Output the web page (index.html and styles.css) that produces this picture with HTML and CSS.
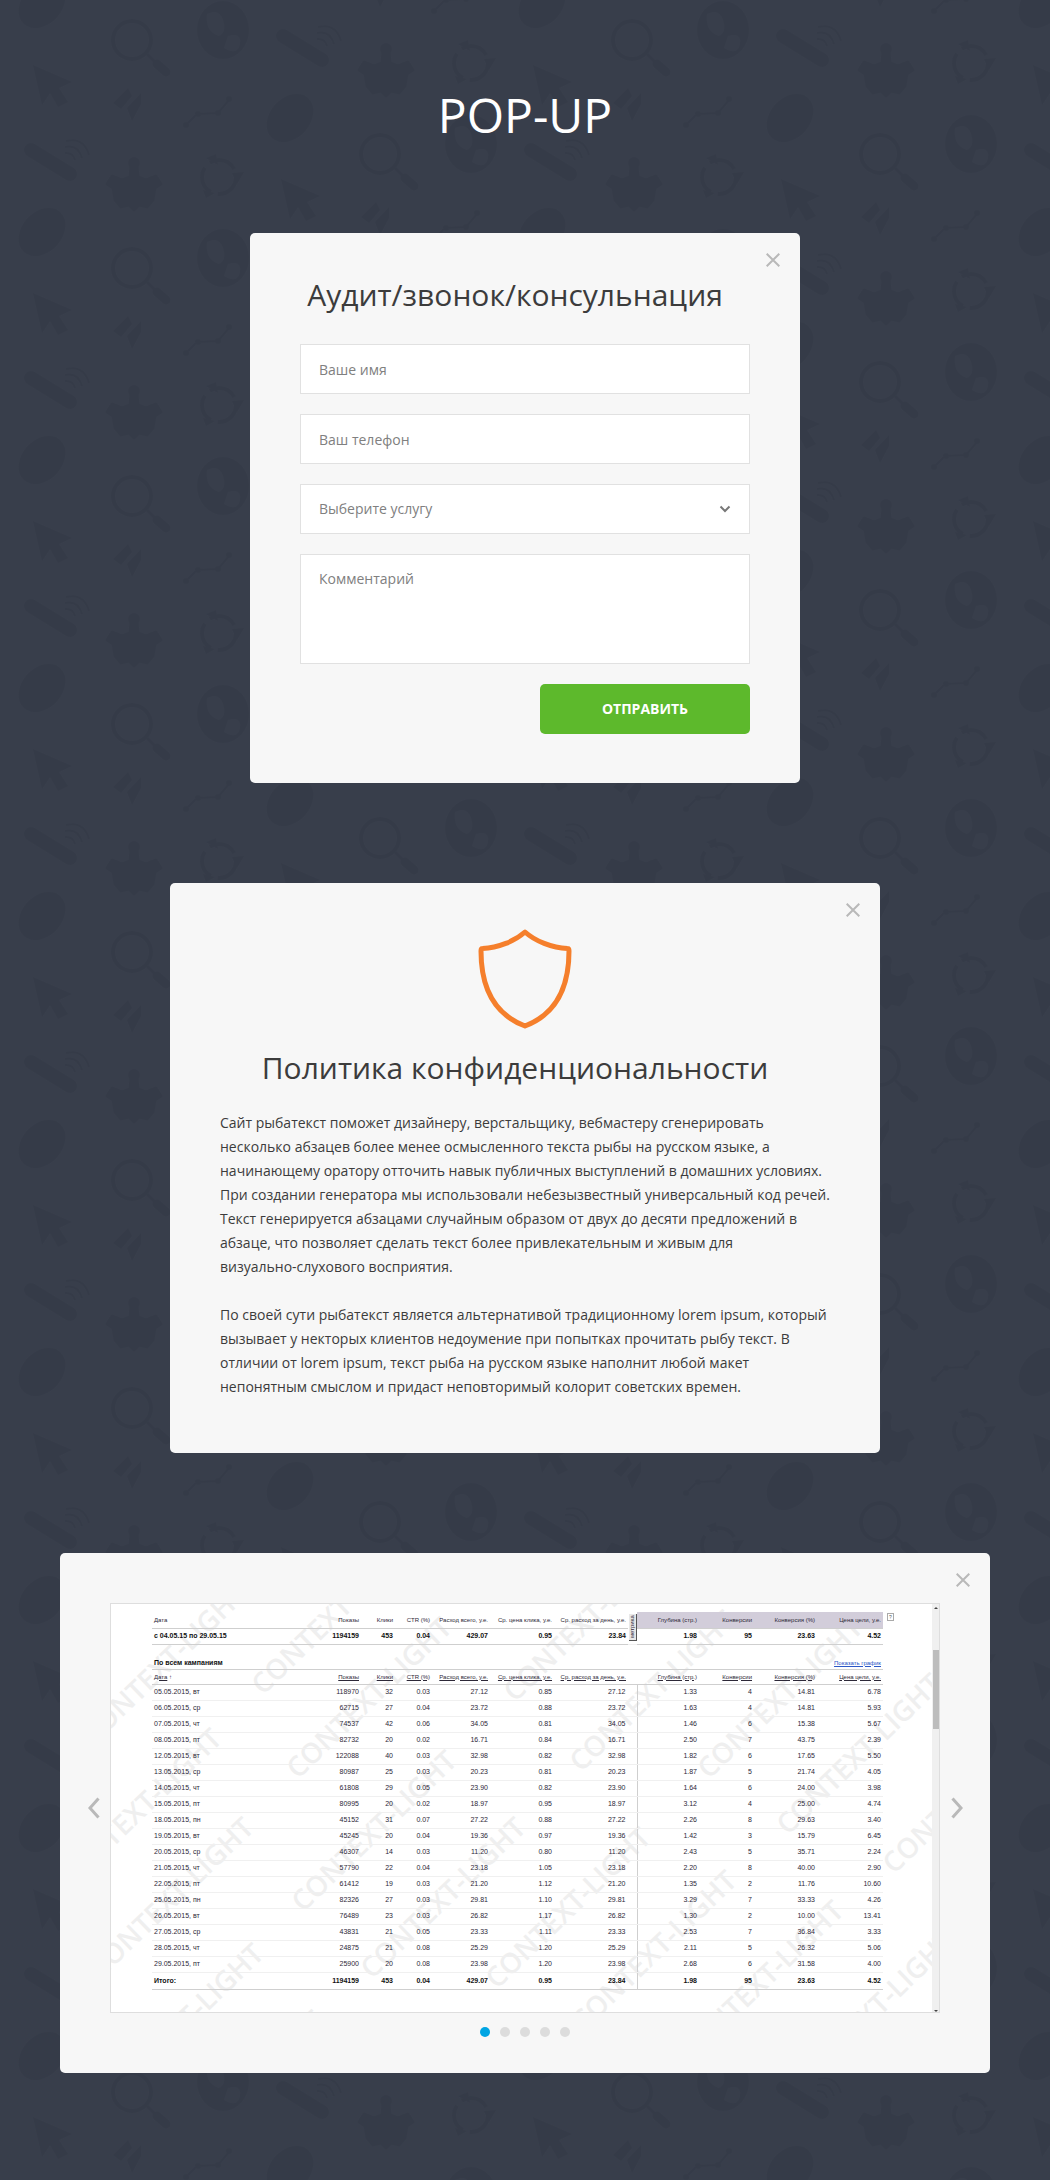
FILE: index.html
```html
<!DOCTYPE html>
<html lang="ru">
<head>
<meta charset="utf-8">
<meta name="viewport" content="width=device-width, initial-scale=1">
<title>POP-UP</title>
<link rel="stylesheet" href="styles.css">
</head>
<body>
<main class="page">
  <h1 class="page-title">POP-UP</h1>

  <section class="popup popup-form" aria-labelledby="form-title">
    <button class="close" type="button" aria-label="Закрыть"><svg width="14" height="14" viewBox="0 0 14 14"><path d="M0.7 0.7 13.3 13.3M13.3 0.7 0.7 13.3"/></svg></button>
    <h2 class="popup-title" id="form-title">Аудит/звонок/консульнация</h2>
    <form class="form">
      <input class="field" type="text" aria-label="Ваше имя" placeholder="Ваше имя">
      <input class="field" type="tel" aria-label="Ваш телефон" placeholder="Ваш телефон">
      <select class="field select" aria-label="Выберите услугу"><option>Выберите услугу</option></select>
      <textarea class="field area" aria-label="Комментарий" placeholder="Комментарий"></textarea>
      <button class="submit" type="submit">ОТПРАВИТЬ</button>
    </form>
  </section>

  <section class="popup popup-policy" aria-labelledby="policy-title">
    <button class="close" type="button" aria-label="Закрыть"><svg width="14" height="14" viewBox="0 0 14 14"><path d="M0.7 0.7 13.3 13.3M13.3 0.7 0.7 13.3"/></svg></button>
    <svg class="shield" width="94" height="100" viewBox="0 0 94 100" aria-hidden="true"><path d="M47 3C37 12 20 19 4.500 19.500Q3 19.500 3 22C3 55 13 84 47 97C81 84 91 55 91 22Q91 19.500 89.500 19.500C74 19 57 12 47 3Z"/></svg>
    <h2 class="popup-title" id="policy-title">Политика конфиденциональности</h2>
    <div class="policy-text">
      <p>Сайт рыбатекст поможет дизайнеру, верстальщику, вебмастеру сгенерировать несколько абзацев более менее осмысленного текста рыбы на русском языке, а начинающему оратору отточить навык публичных выступлений в домашних условиях. При создании генератора мы использовали небезызвестный универсальный код речей. Текст генерируется абзацами случайным образом от двух до десяти предложений в абзаце, что позволяет сделать текст более привлекательным и живым для <span class="nowrap">визуально-слухового</span> восприятия.</p>
      <p>По своей сути рыбатекст является альтернативой традиционному lorem ipsum, который вызывает у некторых клиентов недоумение при попытках прочитать рыбу текст. В отличии от lorem ipsum, текст рыба на русском языке наполнит любой макет непонятным смыслом и придаст неповторимый колорит советских времен.</p>
    </div>
  </section>

  <section class="popup popup-slider" aria-label="Статистика">
    <button class="close" type="button" aria-label="Закрыть"><svg width="14" height="14" viewBox="0 0 14 14"><path d="M0.7 0.7 13.3 13.3M13.3 0.7 0.7 13.3"/></svg></button>
    <div class="slider">
      <button class="arrow" type="button" aria-label="Назад"><svg width="12" height="22" viewBox="0 0 12 22"><path d="M10.500 1.500 2 11 10.500 20.500"/></svg></button>
      <div class="slide">
        <svg class="watermarks" aria-hidden="true">
          <text transform="translate(152 92) rotate(-44)">CONTEXT-LIGHT</text>
          <text transform="translate(187 176) rotate(-44)">CONTEXT-LIGHT</text>
          <text transform="translate(-18 142) rotate(-44)">CONTEXT-LIGHT</text>
          <text transform="translate(-43 287) rotate(-44)">CONTEXT-LIGHT</text>
          <text transform="translate(-11 376) rotate(-44)">CONTEXT-LIGHT</text>
          <text transform="translate(192 309) rotate(-44)">CONTEXT-LIGHT</text>
          <text transform="translate(261 376) rotate(-44)">CONTEXT-LIGHT</text>
          <text transform="translate(-1 502) rotate(-44)">CONTEXT-LIGHT</text>
          <text transform="translate(59 569) rotate(-44)">CONTEXT-LIGHT</text>
          <text transform="translate(404 99) rotate(-44)">CONTEXT-LIGHT</text>
          <text transform="translate(470 169) rotate(-44)">CONTEXT-LIGHT</text>
          <text transform="translate(598 176) rotate(-44)">CONTEXT-LIGHT</text>
          <text transform="translate(677 232) rotate(-44)">CONTEXT-LIGHT</text>
          <text transform="translate(386 386) rotate(-44)">CONTEXT-LIGHT</text>
          <text transform="translate(472 429) rotate(-44)">CONTEXT-LIGHT</text>
          <text transform="translate(579 459) rotate(-44)">CONTEXT-LIGHT</text>
          <text transform="translate(783 271) rotate(-44)">CONTEXT-LIGHT</text>
          <text transform="translate(690 489) rotate(-44)">CONTEXT-LIGHT</text>
        </svg>
        <div class="report">
          <div class="summary">
            <table class="stats stats-summary">
              <colgroup><col><col class="c-shows"><col class="c-clicks"><col class="c-ctr"><col class="c-cost"><col class="c-cpc"><col class="c-day"><col class="c-tag"><col class="c-depth"><col class="c-conv"><col class="c-rate"><col class="c-goal"></colgroup>
              <tr><th>Дата</th><th>Показы</th><th>Клики</th><th>CTR (%)</th><th>Расход всего, у.е.</th><th>Ср. цена клика, у.е.</th><th>Ср. расход за день, у.е.</th><td class="tag" rowspan="2"><span>метрика</span></td><th class="hl">Глубина (стр.)</th><th class="hl">Конверсии</th><th class="hl">Конверсия (%)</th><th class="hl">Цена цели, у.е.</th></tr>
              <tr class="total"><td>с 04.05.15 по 29.05.15</td><td>1194159</td><td>453</td><td>0.04</td><td>429.07</td><td>0.95</td><td>23.84</td><td>1.98</td><td>95</td><td>23.63</td><td>4.52</td></tr>
            </table>
            <button class="help" type="button">?</button>
          </div>
          <div class="report-head"><h3>По всем кампаниям</h3><a href="#">Показать график</a></div>
          <table class="stats stats-main">
            <colgroup><col><col class="c-shows"><col class="c-clicks"><col class="c-ctr"><col class="c-cost"><col class="c-cpc"><col class="c-day-wide"><col class="c-depth"><col class="c-conv"><col class="c-rate"><col class="c-goal"></colgroup>
            <thead><tr><th><u>Дата</u> ↑</th><th><u>Показы</u></th><th><u>Клики</u></th><th><u>CTR (%)</u></th><th><u>Расход всего, у.е.</u></th><th><u>Ср. цена клика, у.е.</u></th><th><u>Ср. расход за день, у.е.</u></th><th><u>Глубина (стр.)</u></th><th><u>Конверсии</u></th><th><u>Конверсия (%)</u></th><th><u>Цена цели, у.е.</u></th></tr></thead>
            <tbody>
            <tr><td>05.05.2015, вт</td><td>118970</td><td>32</td><td>0.03</td><td>27.12</td><td>0.85</td><td>27.12</td><td>1.33</td><td>4</td><td>14.81</td><td>6.78</td></tr>
            <tr><td>06.05.2015, ср</td><td>62715</td><td>27</td><td>0.04</td><td>23.72</td><td>0.88</td><td>23.72</td><td>1.63</td><td>4</td><td>14.81</td><td>5.93</td></tr>
            <tr><td>07.05.2015, чт</td><td>74537</td><td>42</td><td>0.06</td><td>34.05</td><td>0.81</td><td>34.05</td><td>1.46</td><td>6</td><td>15.38</td><td>5.67</td></tr>
            <tr><td>08.05.2015, пт</td><td>82732</td><td>20</td><td>0.02</td><td>16.71</td><td>0.84</td><td>16.71</td><td>2.50</td><td>7</td><td>43.75</td><td>2.39</td></tr>
            <tr><td>12.05.2015, вт</td><td>122088</td><td>40</td><td>0.03</td><td>32.98</td><td>0.82</td><td>32.98</td><td>1.82</td><td>6</td><td>17.65</td><td>5.50</td></tr>
            <tr><td>13.05.2015, ср</td><td>80987</td><td>25</td><td>0.03</td><td>20.23</td><td>0.81</td><td>20.23</td><td>1.87</td><td>5</td><td>21.74</td><td>4.05</td></tr>
            <tr><td>14.05.2015, чт</td><td>61808</td><td>29</td><td>0.05</td><td>23.90</td><td>0.82</td><td>23.90</td><td>1.64</td><td>6</td><td>24.00</td><td>3.98</td></tr>
            <tr><td>15.05.2015, пт</td><td>80995</td><td>20</td><td>0.02</td><td>18.97</td><td>0.95</td><td>18.97</td><td>3.12</td><td>4</td><td>25.00</td><td>4.74</td></tr>
            <tr><td>18.05.2015, пн</td><td>45152</td><td>31</td><td>0.07</td><td>27.22</td><td>0.88</td><td>27.22</td><td>2.26</td><td>8</td><td>29.63</td><td>3.40</td></tr>
            <tr><td>19.05.2015, вт</td><td>45245</td><td>20</td><td>0.04</td><td>19.36</td><td>0.97</td><td>19.36</td><td>1.42</td><td>3</td><td>15.79</td><td>6.45</td></tr>
            <tr><td>20.05.2015, ср</td><td>46307</td><td>14</td><td>0.03</td><td>11.20</td><td>0.80</td><td>11.20</td><td>2.43</td><td>5</td><td>35.71</td><td>2.24</td></tr>
            <tr><td>21.05.2015, чт</td><td>57790</td><td>22</td><td>0.04</td><td>23.18</td><td>1.05</td><td>23.18</td><td>2.20</td><td>8</td><td>40.00</td><td>2.90</td></tr>
            <tr><td>22.05.2015, пт</td><td>61412</td><td>19</td><td>0.03</td><td>21.20</td><td>1.12</td><td>21.20</td><td>1.35</td><td>2</td><td>11.76</td><td>10.60</td></tr>
            <tr><td>25.05.2015, пн</td><td>82326</td><td>27</td><td>0.03</td><td>29.81</td><td>1.10</td><td>29.81</td><td>3.29</td><td>7</td><td>33.33</td><td>4.26</td></tr>
            <tr><td>26.05.2015, вт</td><td>76489</td><td>23</td><td>0.03</td><td>26.82</td><td>1.17</td><td>26.82</td><td>1.30</td><td>2</td><td>10.00</td><td>13.41</td></tr>
            <tr><td>27.05.2015, ср</td><td>43831</td><td>21</td><td>0.05</td><td>23.33</td><td>1.11</td><td>23.33</td><td>2.53</td><td>7</td><td>36.84</td><td>3.33</td></tr>
            <tr><td>28.05.2015, чт</td><td>24875</td><td>21</td><td>0.08</td><td>25.29</td><td>1.20</td><td>25.29</td><td>2.11</td><td>5</td><td>26.32</td><td>5.06</td></tr>
            <tr><td>29.05.2015, пт</td><td>25900</td><td>20</td><td>0.08</td><td>23.98</td><td>1.20</td><td>23.98</td><td>2.68</td><td>6</td><td>31.58</td><td>4.00</td></tr>
            </tbody>
            <tfoot><tr class="total"><td>Итого:</td><td>1194159</td><td>453</td><td>0.04</td><td>429.07</td><td>0.95</td><td>23.84</td><td>1.98</td><td>95</td><td>23.63</td><td>4.52</td></tr></tfoot>
          </table>
          <h3 class="next-head">По способам</h3>
        </div>
        <div class="scrollbar" aria-hidden="true"><i class="up"></i><i class="thumb"></i><i class="down"></i></div>
      </div>
      <button class="arrow" type="button" aria-label="Вперёд"><svg width="12" height="22" viewBox="0 0 12 22"><path d="M1.500 1.500 10 11 1.500 20.500"/></svg></button>
    </div>
    <div class="dots">
      <button class="dot active" type="button" aria-label="Слайд 1"></button>
      <button class="dot" type="button" aria-label="Слайд 2"></button>
      <button class="dot" type="button" aria-label="Слайд 3"></button>
      <button class="dot" type="button" aria-label="Слайд 4"></button>
      <button class="dot" type="button" aria-label="Слайд 5"></button>
    </div>
  </section>
</main>
</body>
</html>
```
FILE: styles.css
```css
* { box-sizing: border-box; }

body {
  margin: 0;
  font: 14px/24px "Open Sans", "Noto Sans", sans-serif;
  color: #3c3c3c;
  background-color: #383e4b;
  background-image: url("data:image/svg+xml,%3Csvg xmlns='http://www.w3.org/2000/svg' xmlns:xlink='http://www.w3.org/1999/xlink' width='500' height='228'%3E%3Cdefs%3E%3Cg id='a' fill='%23353b48' stroke='%23353b48' stroke-width='0'%3E%3Cellipse cx='42' cy='4' rx='20' ry='27' transform='rotate(42 42 4)'/%3E%3Ccircle cx='132' cy='40' r='19' fill='none' stroke-width='4'/%3E%3Cpath d='M147 54 155 62' stroke-width='3'/%3E%3Cpath d='M157 64 166 72' stroke-width='9' stroke-linecap='round'/%3E%3Cellipse cx='223' cy='30' rx='26' ry='29'/%3E%3Cpath d='M207 14q12-6 16 6t-4 16q-14-4-12-22zM228 36q14-4 12 8t-16 4z' fill='%23383e4b'/%3E%3Cpath d='M283 36 322 60' stroke-width='14' stroke-linecap='round'/%3E%3Cpath d='M318 27q18-4 23 14M317 33q13-3 17 11M317 39q8-1 10 7' fill='none' stroke-width='2'/%3E%3Ccircle cx='386' cy='49' r='6'/%3E%3Cpath d='M383 52h6l1 11 8 3 10-4 5 8-6 4-2 12-6 7-8-2-5 5-5-5-8 2-6-7-2-12-6-4 5-8 10 4 8-3z' stroke-width='3' stroke-linejoin='round'/%3E%3Ccircle cx='471' cy='63' r='17' fill='none' stroke-width='4' stroke-dasharray='28 7'/%3E%3Cpath d='M458 44l10-4 2 11zM489 70l7-12-12 1zM455 76l3 8 9-5zM33 65 72 82 59 88 68 102 58 107 50 93 42 105z'/%3E%3Cpath d='M113 103l15-15 4 8-11 13zM127 108l14-15 0 11-9 17z'/%3E%3Cpath d='M186 125 197 114 218 113 229 100' fill='none' stroke-width='2'/%3E%3Ccircle cx='186' cy='125' r='3'/%3E%3Ccircle cx='198' cy='114' r='3'/%3E%3Ccircle cx='218' cy='113' r='3'/%3E%3Ccircle cx='229' cy='99' r='3'/%3E%3C/g%3E%3C/defs%3E%3Cuse xlink:href='%23a'/%3E%3Cuse xlink:href='%23a' y='228'/%3E%3Cuse xlink:href='%23a' x='500'/%3E%3Cuse xlink:href='%23a' x='-500'/%3E%3Cuse xlink:href='%23a' x='248' y='114'/%3E%3Cuse xlink:href='%23a' x='-252' y='114'/%3E%3Cuse xlink:href='%23a' x='248' y='-114'/%3E%3Cuse xlink:href='%23a' x='-252' y='-114'/%3E%3C/svg%3E");
}

button { padding: 0; border: 0; background: none; font-family: inherit; cursor: pointer; }

.nowrap { white-space: nowrap; }

.page {
  display: flex;
  flex-direction: column;
  align-items: center;
  gap: 100px;
  padding: 90px 20px 107px;
}

.page-title {
  margin: 0 0 -7px;
  font-size: 48px;
  line-height: 50px;
  font-weight: 400;
  color: #fff;
}

.popup {
  position: relative;
  width: 100%;
  padding: 50px;
  border-radius: 5px;
  background: #f7f7f7;
}

.popup-form { max-width: 550px; padding-bottom: 49px; }
.popup-policy { max-width: 710px; padding: 46px 50px 54px; }
.popup-slider { max-width: 930px; padding: 50px 0 36px; }

.popup-title {
  margin: 0;
  padding-right: 20px;
  font-size: 30px;
  line-height: 24px;
  font-weight: 400;
  text-align: center;
}

.close { position: absolute; top: 20px; right: 20px; display: flex; }
.close svg { fill: none; stroke: #b9b9b9; stroke-width: 2; }

/* Form */
.form {
  display: flex;
  flex-direction: column;
  gap: 20px;
  margin-top: 37px;
}

.field {
  display: block;
  width: 100%;
  height: 50px;
  margin: 0;
  padding: 0 18px;
  border: 1px solid #e1e1e1;
  border-radius: 0;
  background: #fff;
  font: 14px/20px "Open Sans", "Noto Sans", sans-serif;
  color: #808080;
}
.field::placeholder { color: #808080; opacity: 1; }

.select {
  appearance: none;
  background: #fff url("data:image/svg+xml,%3Csvg xmlns='http://www.w3.org/2000/svg' width='12' height='8'%3E%3Cpath d='M1.500 1.500 6 6 10.500 1.500' fill='none' stroke='%23777' stroke-width='2'/%3E%3C/svg%3E") no-repeat right 18px center;
}

.area { height: 110px; padding: 14px 18px; resize: none; }

.submit {
  align-self: flex-end;
  width: 210px;
  height: 50px;
  padding-bottom: 2px;
  border-radius: 5px;
  background: #5db92c;
  font-size: 14px;
  font-weight: 700;
  color: #fff;
}

/* Policy */
.shield {
  display: block;
  margin: 0 auto 27px;
  fill: none;
  stroke: #f57f2c;
  stroke-width: 5;
  stroke-linejoin: round;
}
.policy-text { margin-top: 31px; }
.policy-text p { margin: 0 0 24px; }
.policy-text p:last-child { margin-bottom: 0; }

/* Slider */
.slider { display: flex; align-items: center; }
.arrow { display: flex; flex: 0 0 50px; justify-content: center; }
.arrow:first-child { padding-left: 18px; }
.arrow:last-child { padding-right: 16px; }
.arrow svg { fill: none; stroke: #b9b9b9; stroke-width: 3; }

.slide {
  position: relative;
  display: flex;
  flex: 1;
  min-width: 0;
  height: 410px;
  overflow: hidden;
  border: 1px solid #dedede;
  background: #fff;
}

.watermarks { position: absolute; top: 0; left: 0; width: 100%; height: 100%; }
.watermarks text { font: 600 28px "Open Sans", sans-serif; fill: #efefef; }

.report {
  position: relative;
  flex: 1;
  padding: 8px 49px 0 41px;
  font: 7px/10px "Liberation Sans", sans-serif;
  color: #2d2838;
}

.summary { position: relative; }
.stats { width: 100%; border-collapse: collapse; table-layout: fixed; }
.c-shows { width: 61px; }
.c-clicks { width: 34px; }
.c-ctr { width: 37px; }
.c-cost { width: 58px; }
.c-cpc { width: 64px; }
.c-day { width: 74px; }
.c-day-wide { width: 83px; }
.c-tag { width: 9px; }
.c-depth { width: 62px; }
.c-conv { width: 55px; }
.c-rate { width: 63px; }
.c-goal { width: 66px; }

.stats tr { height: 16px; }
.stats td, .stats th {
  padding: 0 2px;
  border-bottom: 1px solid #f0f0f0;
  text-align: right;
  white-space: nowrap;
}
.stats th { font-size: 6px; font-weight: 400; border-color: #cfcfcf; }
.stats td:first-child, .stats th:first-child { text-align: left; }
.stats .total td { border-color: #cfcfcf; font-weight: 700; color: #111; }
.stats .hl { background: #d2cdda; }

.stats .tag {
  padding: 2px 0 2px 1px;
  vertical-align: top;
}
.tag span {
  display: block;
  width: 8px;
  height: 27px;
  border: solid #555;
  border-width: 1px 0 0 1px;
  background: #e8e8e8;
  writing-mode: vertical-rl;
  transform: rotate(180deg);
  text-align: center;
  font-size: 6px;
  line-height: 7px;
}

.help {
  position: absolute;
  top: 1px;
  left: calc(100% + 4px);
  width: 7px;
  height: 8px;
  border: 1px solid #aaa;
  font-size: 5px;
  line-height: 6px;
  color: #555;
}

.report-head {
  display: flex;
  align-items: center;
  justify-content: space-between;
  height: 24px;
  padding: 12px 2px 0;
}
.report h3 { margin: 0; font-size: 7px; line-height: 10px; color: #111; }
.report-head a { font-size: 6px; line-height: 8px; color: #2a56c6; }

.stats-main thead tr { height: 15px; }
.stats-main thead th { border-top: 1px solid #cfcfcf; }
.stats-main tbody td:nth-child(7), .stats-main tfoot td:nth-child(7) { border-right: 1px solid #cfcfcf; }
.stats-main td:nth-child(7), .stats-main th:nth-child(7) { padding-right: 11px; }
.stats-main tfoot tr { height: 17px; }
.stats-main tfoot td { border-top: 1px solid #cfcfcf; }
.report .next-head { margin-top: 21px; padding-left: 2px; }

.scrollbar {
  position: relative;
  display: flex;
  flex: 0 0 7px;
  flex-direction: column;
  align-items: center;
  background: #f0f0f0;
}
.up, .down { width: 0; height: 0; border: solid transparent; border-width: 0 2px; }
.up { margin-top: 3px; border-bottom: 2px solid #444; }
.down { margin-top: auto; border-top: 2px solid #444; }
.thumb { width: 6px; height: 79px; margin-top: 41px; background: #bdbdbd; }

.dots { display: flex; justify-content: center; gap: 10px; margin-top: 14px; }
.dot { width: 10px; height: 10px; border-radius: 50%; background: #dcdcdc; }
.dot.active { background: #00a5e3; }
```
